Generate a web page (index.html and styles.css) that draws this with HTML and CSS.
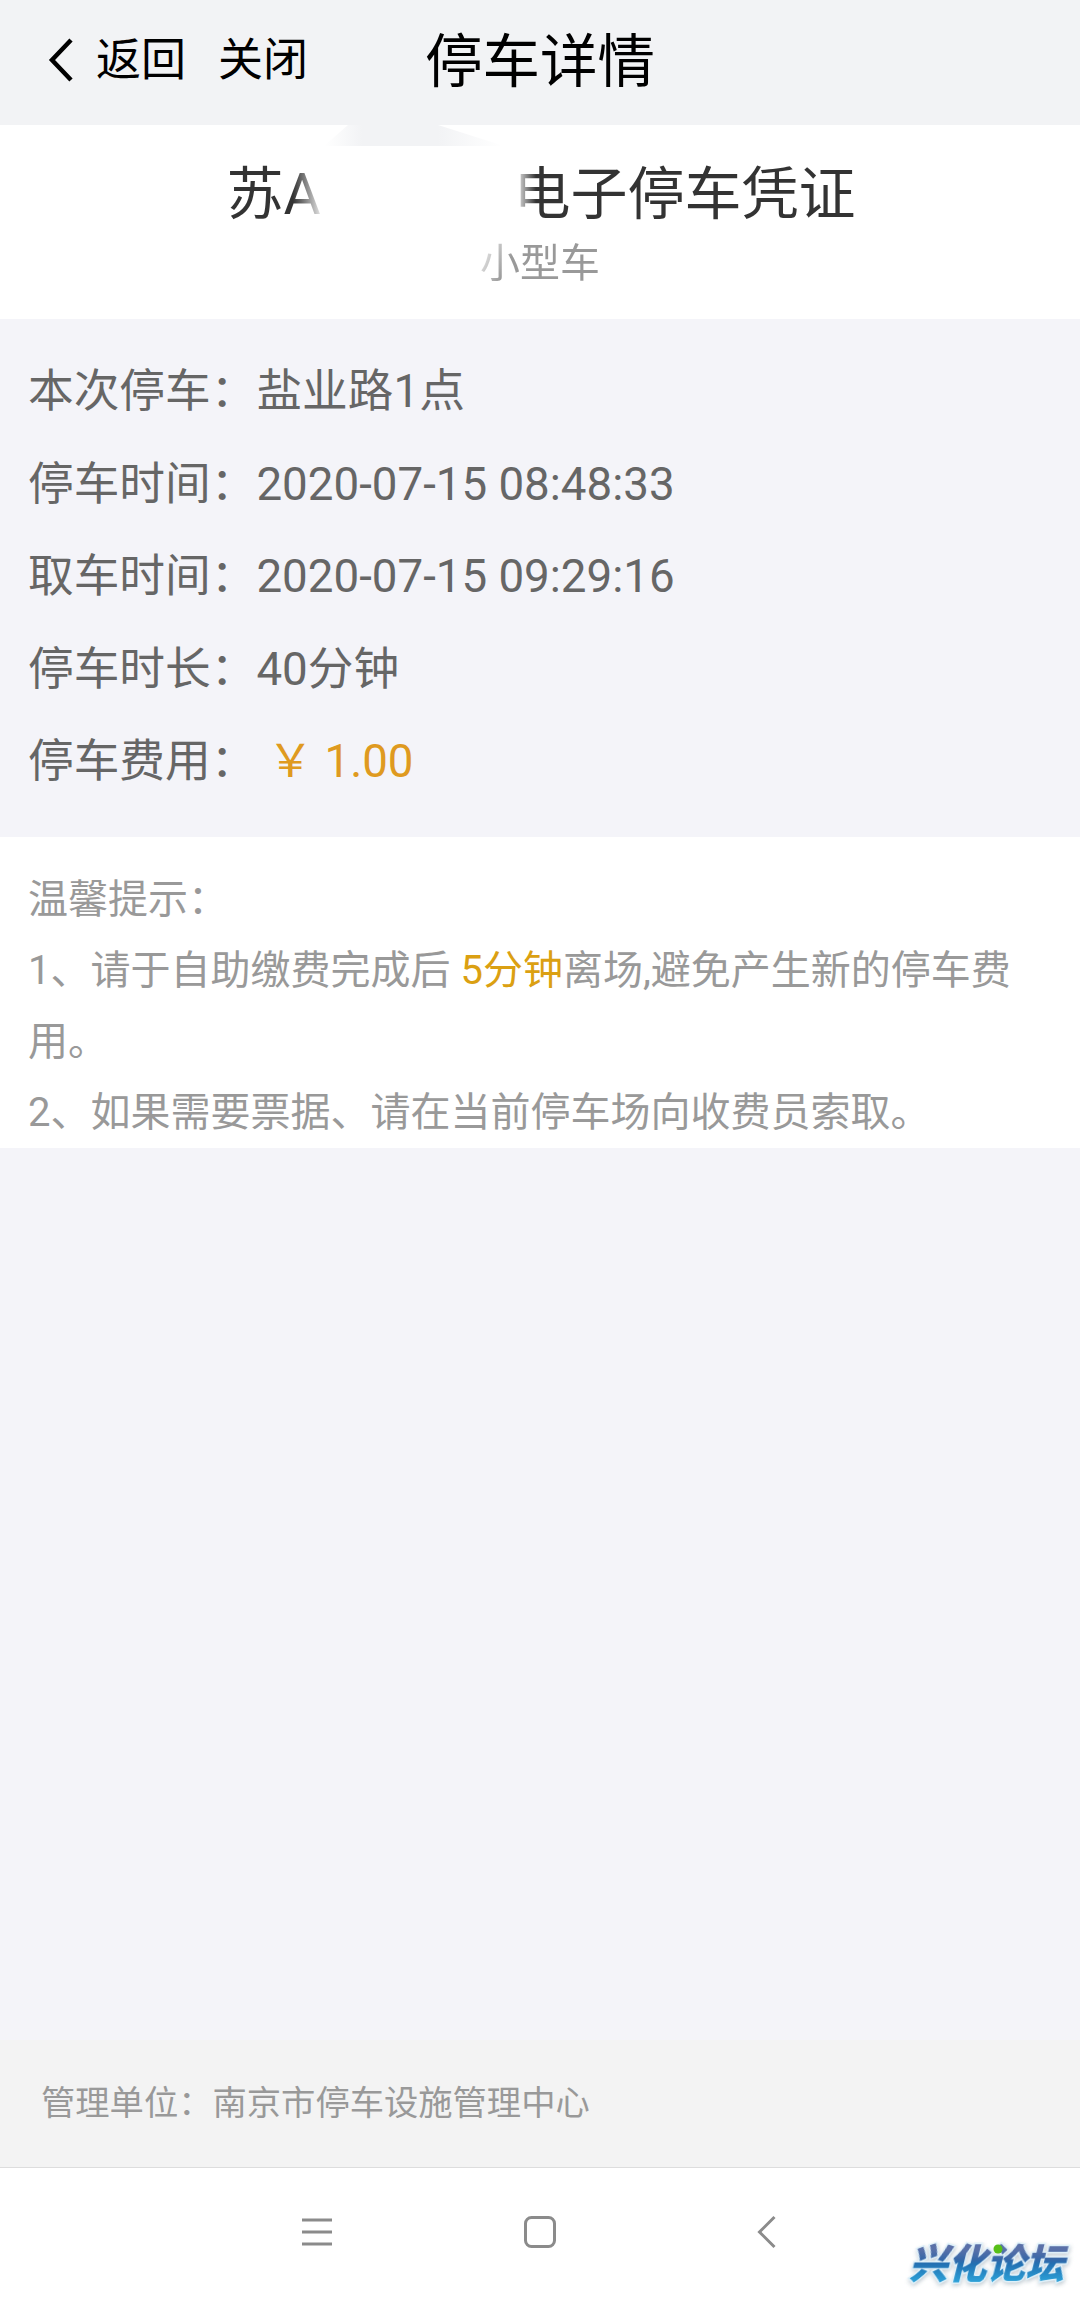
FILE: index.html
```html
<!DOCTYPE html>
<html lang="zh-CN">
<head>
<meta charset="utf-8">
<title>停车详情</title>
<link rel="stylesheet" href="styles.css">
</head>
<body>
<header class="topbar">
  <div class="topbar-actions">
    <svg class="back-icon" viewBox="0 0 26 44" width="26" height="44"><path d="M23 2 4 22l19 20" fill="none" stroke="#000" stroke-width="4.500"/></svg>
    <span>返回</span>
    <span class="close">关闭</span>
  </div>
  <h1 class="title">停车详情</h1>
</header>
<section class="voucher">
  <svg class="smudge" viewBox="0 0 200 21" width="200" height="21"><defs><linearGradient id="fade-left"><stop offset="0" stop-color="#f2f3f5" stop-opacity="0"/><stop offset="1" stop-color="#f2f3f5"/></linearGradient><linearGradient id="fade-right"><stop offset="0" stop-color="#f2f3f5"/><stop offset="1" stop-color="#f2f3f5" stop-opacity="0"/></linearGradient></defs><path d="M32 0H46V21H8Z" fill="url(#fade-left)"/><path d="M46 0H122V21H46Z" fill="#f2f3f5"/><path d="M122 0 188 21H122Z" fill="url(#fade-right)"/></svg>
  <h2 class="plate"><span class="plate-start">苏A</span><span class="plate-end">电子停车凭证</span></h2>
  <p class="vehicle">小型车</p>
</section>
<dl class="details">
  <div class="row"><dt>本次停车：</dt><dd>盐业路1点</dd></div>
  <div class="row"><dt>停车时间：</dt><dd>2020-07-15 08:48:33</dd></div>
  <div class="row"><dt>取车时间：</dt><dd>2020-07-15 09:29:16</dd></div>
  <div class="row"><dt>停车时长：</dt><dd>40分钟</dd></div>
  <div class="row"><dt>停车费用：</dt><dd class="fee">￥ 1.00</dd></div>
</dl>
<section class="tips">
  <p>温馨提示：</p>
  <p>1、请于自助缴费完成后 <span class="limit">5分钟</span>离场,避免产生新的停车费用。</p>
  <p>2、如果需要票据、请在当前停车场向收费员索取。</p>
</section>
<footer class="operator">管理单位：南京市停车设施管理中心</footer>
<nav class="navbar">
  <svg width="32" height="34" viewBox="0 0 32 34"><path d="M1 5h30M1 17h30M1 29h30" stroke="#8b8b8b" stroke-width="3"/></svg>
  <svg width="32" height="34" viewBox="0 0 32 34"><rect x="1.500" y="2.500" width="29" height="29" rx="6" fill="none" stroke="#8b8b8b" stroke-width="3"/></svg>
  <svg width="32" height="34" viewBox="0 0 32 34"><path d="M27.500 2 12.500 17l15 15" fill="none" stroke="#8b8b8b" stroke-width="3"/></svg>
  <svg class="watermark" viewBox="0 0 190 80" width="190" height="80">
    <defs><linearGradient id="ink" x1="0" y1="0" x2="0" y2="1"><stop offset="0.300" stop-color="#5a70a8"/><stop offset="0.480" stop-color="#3567a8"/><stop offset="0.550" stop-color="#2270b2"/><stop offset="0.850" stop-color="#2c9fd6"/></linearGradient></defs>
    <text class="logo" transform="translate(19 61) skewX(-14)" textLength="155" lengthAdjust="spacingAndGlyphs">兴化论坛</text>
    <circle cx="108" cy="32" r="4.500" fill="#58c018"/>
  </svg>
</nav>
</body>
</html>
```
FILE: styles.css
```css
* { box-sizing: border-box; margin: 0; padding: 0; }
body {
  display: flex;
  flex-direction: column;
  height: 2297px;
  background: #f4f4f9;
  font-family: Roboto, "Noto Sans CJK SC", sans-serif;
  color: #666;
}
.topbar {
  display: grid;
  grid-template-columns: 1fr auto 1fr;
  align-items: center;
  height: 125px;
  padding: 0 45px 6px;
  background: #f2f3f5;
  color: #000;
}
.topbar-actions { display: flex; align-items: center; padding-top: 3px; font-size: 45px; line-height: 60px; }
.back-icon { margin: 0 22px 2px 3px; }
.close { margin-left: 32px; }
.title { padding-top: 7px; font-size: 57.5px; font-weight: 400; line-height: 80px; }
.voucher { position: relative; height: 194px; padding-top: 30px; background: #fff; text-align: center; }
.smudge { position: absolute; left: 316px; top: 0; }
.plate { display: flex; justify-content: space-between; width: 629px; margin: 0 auto; padding-left: 1px; font-size: 57px; font-weight: 400; line-height: 80px; color: #333; }
.plate-start { color: transparent; background: linear-gradient(90deg, #333 66px, #fff 98px); background-clip: text; }
.plate-end { margin-right: -1px; color: transparent; background: linear-gradient(90deg, #fff 0, #333 22px); background-clip: text; }
.vehicle { width: 120px; margin: 0 auto; font-size: 40px; line-height: 58px; color: transparent; background: linear-gradient(115deg, #fff 0, #999 38px); background-clip: text; }
.details { height: 518px; padding: 27px 28px 0; font-size: 45.7px; line-height: 92.5px; }
.row { display: flex; }
.fee { color: #df9a20; padding-left: 11px; }
.tips { height: 311px; padding: 27px 28px 0; background: #fff; color: #999; font-size: 40px; line-height: 71px; }
.limit { color: #dba012; }
.operator { height: 127px; margin-top: auto; padding-left: 41px; background: #f3f3f3; color: #999; font-size: 34.3px; line-height: 126px; }
.navbar { position: relative; display: flex; justify-content: center; gap: 191px; height: 130px; padding-top: 47px; background: #fff; border-top: 1px solid #ddd; }
.watermark { position: absolute; right: 0; bottom: 0; }
.logo { font: 900 40px "Noto Sans CJK SC", sans-serif; fill: url(#ink); stroke: #e0f1fa; stroke-width: 3px; paint-order: stroke; filter: drop-shadow(1px 2px 2px #c5ced5); }
```
